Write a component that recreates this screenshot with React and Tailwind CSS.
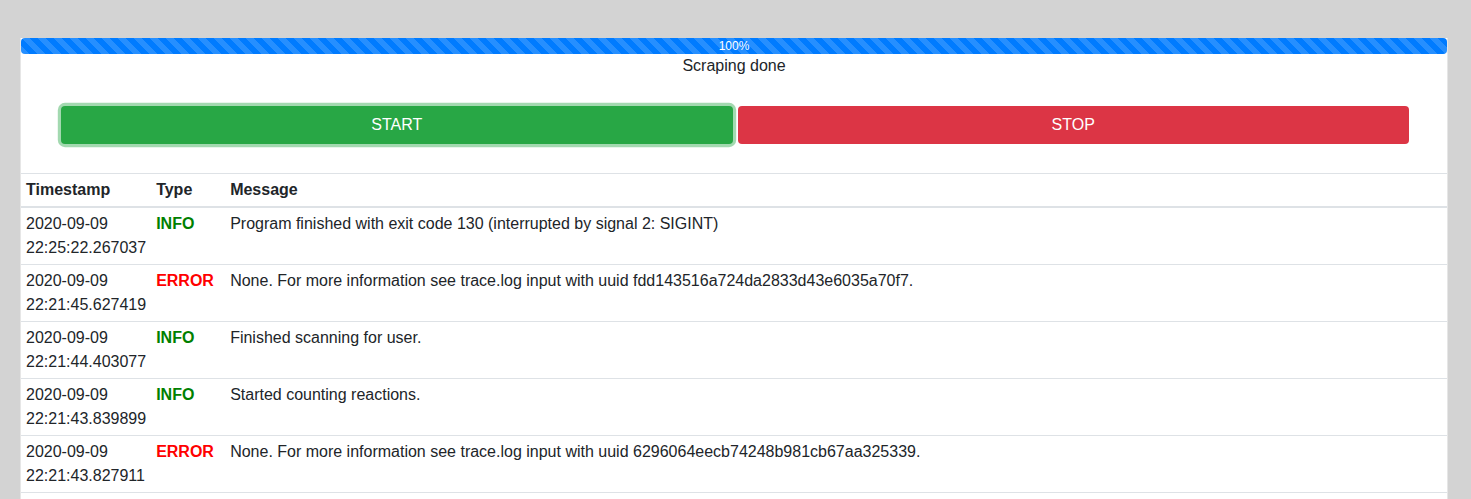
import React from "react";

const rows = [
  ["2020-09-09", "22:25:22.267037", "INFO", "Program finished with exit code 130 (interrupted by signal 2: SIGINT)"],
  ["2020-09-09", "22:21:45.627419", "ERROR", "None. For more information see trace.log input with uuid fdd143516a724da2833d43e6035a70f7."],
  ["2020-09-09", "22:21:44.403077", "INFO", "Finished scanning for user."],
  ["2020-09-09", "22:21:43.839899", "INFO", "Started counting reactions."],
  ["2020-09-09", "22:21:43.827911", "ERROR", "None. For more information see trace.log input with uuid 6296064eecb74248b981cb67aa325339."],
];

export default function App() {
  return (
    <div className="min-h-screen bg-[#d3d3d3] pt-[38px] pl-[20px] font-['Liberation_Sans',Arial,sans-serif] text-[#212529] text-base leading-6">
      <div className="w-[1428px] bg-white border-x border-[#e6e6e6] pb-10">
        <div className="h-4 rounded bg-[#007bff] bg-[linear-gradient(45deg,rgba(255,255,255,.15)_25%,transparent_25%,transparent_50%,rgba(255,255,255,.15)_50%,rgba(255,255,255,.15)_75%,transparent_75%,transparent)] bg-[length:1rem_1rem] text-white text-xs leading-4 text-center">
          100%
        </div>
        <div className="text-center leading-6">Scraping done</div>
        <div className="flex gap-[5px] pl-[40px] pr-[38px] mt-[28px]">
          <button className="flex-1 h-[38px] rounded bg-[#28a745] text-white uppercase shadow-[0_0_0_0.2rem_rgba(72,180,97,0.5)]">
            Start
          </button>
          <button className="flex-1 h-[38px] rounded bg-[#dc3545] text-white uppercase">
            Stop
          </button>
        </div>
        <table className="w-full mt-[29px] border-collapse text-left">
          <thead>
            <tr className="border-t border-[#dee2e6] border-b-2">
              <th className="w-[130px] px-[5px] py-1 font-bold align-bottom">Timestamp</th>
              <th className="w-[74px] px-[5px] py-1 font-bold align-bottom">Type</th>
              <th className="px-[5px] py-1 font-bold align-bottom">Message</th>
            </tr>
          </thead>
          <tbody>
            {rows.map((r, i) => (
              <tr key={i} className="border-b border-[#dee2e6]">
                <td className="px-[5px] py-1 align-top">
                  {r[0]}
                  <br />
                  {r[1]}
                </td>
                <td className={`px-[5px] py-1 align-top font-bold ${r[2] === "INFO" ? "text-[#008000]" : "text-[#ff0000]"}`}>
                  {r[2]}
                </td>
                <td className="px-[5px] py-1 align-top">{r[3]}</td>
              </tr>
            ))}
          </tbody>
        </table>
      </div>
    </div>
  );
}
